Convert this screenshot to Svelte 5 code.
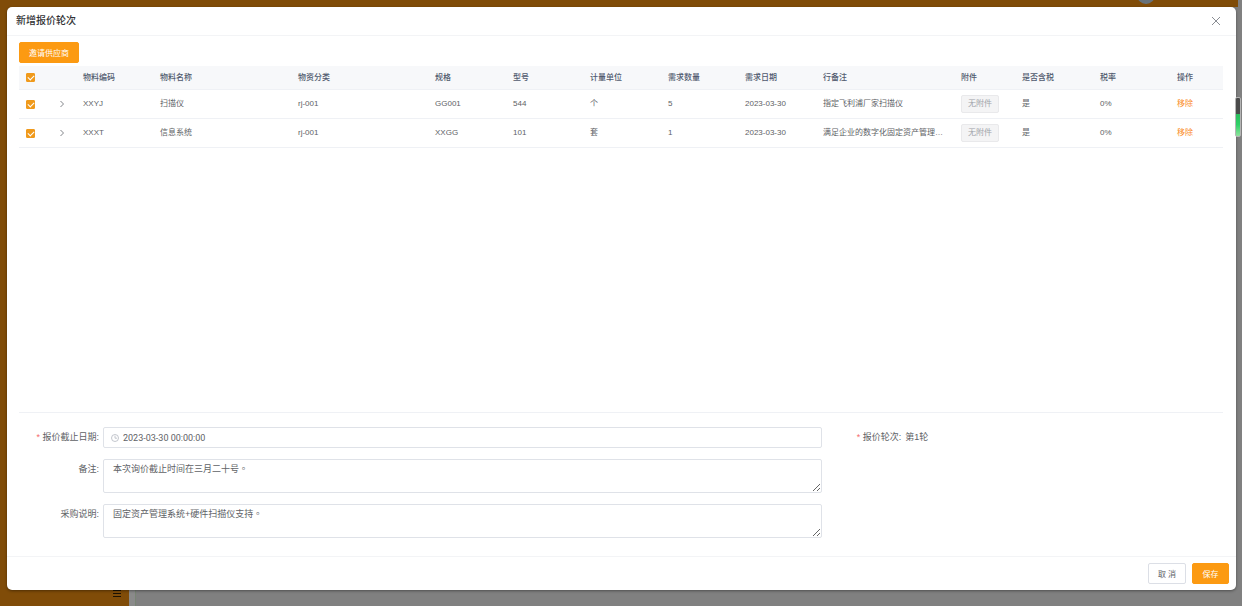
<script lang="ts">
type Row = {
	code: string;
	name: string;
	category: string;
	spec: string;
	model: string;
	unit: string;
	qty: number;
	date: string;
	remark: string;
	taxed: string;
	rate: string;
	checked: boolean;
};

const columns = [
	{ label: '物料编码', width: 77 },
	{ label: '物料名称', width: 138 },
	{ label: '物资分类', width: 137 },
	{ label: '规格', width: 78 },
	{ label: '型号', width: 77 },
	{ label: '计量单位', width: 78 },
	{ label: '需求数量', width: 77 },
	{ label: '需求日期', width: 78 },
	{ label: '行备注', width: 138 },
	{ label: '附件', width: 61 },
	{ label: '是否含税', width: 78 },
	{ label: '税率', width: 77 },
	{ label: '操作', width: 53 },
];

let rows: Row[] = $state([
	{
		code: 'XXYJ',
		name: '扫描仪',
		category: 'rj-001',
		spec: 'GG001',
		model: '544',
		unit: '个',
		qty: 5,
		date: '2023-03-30',
		remark: '指定飞利浦厂家扫描仪',
		taxed: '是',
		rate: '0%',
		checked: true,
	},
	{
		code: 'XXXT',
		name: '信息系统',
		category: 'rj-001',
		spec: 'XXGG',
		model: '101',
		unit: '套',
		qty: 1,
		date: '2023-03-30',
		remark: '满足企业的数字化固定资产管理系统',
		taxed: '是',
		rate: '0%',
		checked: true,
	},
]);

let deadline = $state('2023-03-30 00:00:00');
let remark = $state('本次询价截止时间在三月二十号。');
let description = $state('固定资产管理系统+硬件扫描仪支持。');

const allChecked = $derived(rows.length > 0 && rows.every((r) => r.checked));

function toggleAll() {
	const next = !allChecked;
	rows.forEach((r) => (r.checked = next));
}

function remove(row: Row) {
	rows = rows.filter((r) => r !== row);
}
</script>

<div class="page">
	<div class="backdrop">
		<div class="topbar"><span class="avatar"></span></div>
		<div class="sidebar">
			<svg width="8" height="8" viewBox="0 0 8 8">
				<path d="M0 1.5h8M0 4.5h8M0 7.5h8" stroke="#1c1204" stroke-width="1.2" />
			</svg>
		</div>
		<div class="gutter"></div>
	</div>

	<div class="dialog" role="dialog" aria-labelledby="dialog-title">
		<header>
			<h1 id="dialog-title">新增报价轮次</h1>
			<button class="close" aria-label="关闭">
				<svg width="10" height="10" viewBox="0 0 10 10">
					<path d="M1 1l8 8M9 1l-8 8" stroke="#8a8d93" fill="none" />
				</svg>
			</button>
		</header>

		<main>
			<button class="btn primary invite">邀请供应商</button>

			<div class="table-wrap">
				<table>
					<colgroup>
						<col style:width="28px" />
						<col style:width="29px" />
						{#each columns as col}
							<col style:width="{col.width}px" />
						{/each}
					</colgroup>
					<thead>
						<tr>
							<th><input type="checkbox" aria-label="全选" checked={allChecked} onchange={toggleAll} /></th>
							<th></th>
							{#each columns as col}
								<th>{col.label}</th>
							{/each}
						</tr>
					</thead>
					<tbody>
						{#each rows as row (row.code)}
							<tr>
								<td><input type="checkbox" aria-label={row.code} bind:checked={row.checked} /></td>
								<td class="expand">
									<button aria-label="展开">
										<svg width="6" height="8" viewBox="0 0 6 8">
											<path d="M1.5 1l3 3-3 3" stroke="#73767c" stroke-width="0.9" fill="none" />
										</svg>
									</button>
								</td>
								<td>{row.code}</td>
								<td>{row.name}</td>
								<td>{row.category}</td>
								<td>{row.spec}</td>
								<td>{row.model}</td>
								<td>{row.unit}</td>
								<td>{row.qty}</td>
								<td>{row.date}</td>
								<td>{row.remark}</td>
								<td><button class="tag" disabled>无附件</button></td>
								<td>{row.taxed}</td>
								<td>{row.rate}</td>
								<td><button class="link" onclick={() => remove(row)}>移除</button></td>
							</tr>
						{/each}
					</tbody>
				</table>
			</div>

			<form>
				<div class="fields">
					<label for="deadline"><i>*</i> 报价截止日期:</label>
					<div class="date">
						<svg width="8" height="8" viewBox="0 0 8 8" fill="none" stroke="#b4b8c0" stroke-width="0.8">
							<circle cx="4" cy="4" r="3.5" />
							<path d="M4 1.8v2.4h2" />
						</svg>
						<input id="deadline" type="text" bind:value={deadline} />
					</div>
					<label for="remark">备注:</label>
					<textarea id="remark" bind:value={remark}></textarea>
					<label for="description">采购说明:</label>
					<textarea id="description" bind:value={description}></textarea>
				</div>
				<div class="round">
					<span class="label"><i>*</i> 报价轮次:</span>
					<span>第1轮</span>
				</div>
			</form>
		</main>

		<footer>
			<button class="btn">取 消</button>
			<button class="btn primary save">保存</button>
		</footer>
	</div>

	<div class="meter"></div>
</div>

<style>
	:global(body) {
		margin: 0;
		background: #808080;
	}
	.page {
		position: relative;
		box-sizing: border-box;
		display: flex;
		min-height: 100vh;
		padding: 7px 6px 16px 7px;
		font-family: 'Liberation Sans', 'Noto Sans CJK SC', sans-serif;
		font-size: 8px;
		color: #606266;
	}
	button,
	input,
	textarea {
		box-sizing: border-box;
		margin: 0;
		font: inherit;
		color: inherit;
	}
	button {
		padding: 0;
		border: 0;
		background: none;
		cursor: pointer;
	}
	svg {
		display: block;
	}

	.backdrop {
		position: absolute;
		inset: 0;
		display: grid;
		grid-template-columns: 129px 7px 1fr;
		grid-template-rows: 7px 1fr;
	}
	.topbar {
		grid-column: 1 / -1;
		display: flex;
		justify-content: flex-end;
		align-items: flex-end;
		margin-right: 4px;
		padding-right: 83px;
		background: #804c08;
		overflow: hidden;
	}
	.avatar {
		width: 18px;
		height: 18px;
		margin-bottom: 3px;
		border-radius: 50%;
		background: #66717a;
	}
	.sidebar {
		display: flex;
		justify-content: flex-end;
		align-items: flex-end;
		padding: 0 8px 9px 0;
		background: #804c08;
	}
	.gutter {
		box-sizing: border-box;
		background: #8a8a8a;
		border-right: 1px solid #788474;
	}
	.meter {
		position: absolute;
		top: 97px;
		right: 1px;
		box-sizing: border-box;
		width: 6px;
		height: 40px;
		border: 1px solid #b5b5b5;
		border-radius: 2px;
		background: linear-gradient(#4a4a4a 42%, #2bbd5d 43%, #2fd067 70%, #8ee29c);
	}

	.dialog {
		position: relative;
		flex: 1;
		min-width: 0;
		display: flex;
		flex-direction: column;
		border-radius: 5px;
		background: #fff;
		box-shadow: 0 1px 3px rgba(0, 0, 0, 0.4);
	}
	header {
		display: flex;
		align-items: center;
		justify-content: space-between;
		box-sizing: border-box;
		height: 29px;
		padding: 0 15px 0 9px;
		border-bottom: 1px solid #f3f4f6;
	}
	h1 {
		margin: 0;
		font-size: 10px;
		line-height: 16px;
		font-weight: 500;
		color: #303133;
	}

	main {
		flex: 1;
		display: flex;
		flex-direction: column;
		padding: 6px 13px 18px 12px;
	}
	.btn {
		height: 21px;
		border: 1px solid #dcdfe6;
		border-radius: 2px;
		background: #fff;
		white-space: nowrap;
	}
	.btn.primary {
		border-color: #fc9a12;
		background: #fc9a12;
		color: #fff;
	}
	.invite {
		align-self: flex-start;
		width: 60px;
		margin-bottom: 3px;
	}

	.table-wrap {
		flex: 1;
		border-bottom: 1px solid #eff1f5;
	}
	table {
		width: 100%;
		table-layout: fixed;
		border-collapse: separate;
		border-spacing: 0;
	}
	th,
	td {
		box-sizing: border-box;
		padding: 0 7px;
		border-bottom: 1px solid #eff1f5;
		text-align: left;
		white-space: nowrap;
		overflow: hidden;
		text-overflow: ellipsis;
		line-height: 12px;
	}
	th {
		height: 24px;
		background: #f7f8fa;
		font-weight: 500;
		color: #515a6e;
	}
	td {
		height: 29px;
	}
	input[type='checkbox'] {
		appearance: none;
		display: block;
		width: 9px;
		height: 9px;
		border: 1px solid #dcdfe6;
		border-radius: 1px;
		background: #fff;
	}
	input[type='checkbox']:checked {
		border-color: #f09a1c;
		background: #f09a1c;
	}
	input[type='checkbox']:checked::after {
		content: '';
		display: block;
		box-sizing: border-box;
		width: 4px;
		height: 6px;
		margin: 0 auto;
		border: solid #fff;
		border-width: 0 1px 1px 0;
		transform: rotate(45deg);
	}
	.expand button {
		display: block;
		margin-left: 5px;
	}
	.tag {
		display: block;
		width: 38px;
		height: 18px;
		border: 1px solid #e9e9eb;
		border-radius: 2px;
		background: #f4f4f5;
		color: #a0a3a9;
	}
	.link {
		color: #fa8c28;
	}

	form {
		display: grid;
		grid-template-columns: 2fr 1fr;
		padding-top: 14px;
		font-size: 9px;
		line-height: 12px;
	}
	.fields {
		display: grid;
		grid-template-columns: 84px 1fr;
		row-gap: 11px;
	}
	.fields label {
		padding: 4px 4px 0 0;
		text-align: right;
	}
	i {
		font-style: normal;
		color: #f56c6c;
	}
	.date {
		display: flex;
		align-items: center;
		gap: 4px;
		box-sizing: border-box;
		height: 21px;
		padding: 0 7px;
		border: 1px solid #dfe2e8;
		border-radius: 2px;
	}
	.date input {
		flex: 1;
		height: 17px;
		padding: 0;
		border: 0;
		outline: 0;
		background: none;
		font-family: Roboto, 'Noto Sans CJK SC', sans-serif;
	}
	textarea {
		display: block;
		width: 100%;
		height: 34px;
		padding: 3px 9px;
		border: 1px solid #dfe2e8;
		border-radius: 2px;
		background: #fff;
		font-family: 'Liberation Sans', 'Noto Sans CJK TC', sans-serif;
		resize: vertical;
	}
	.round {
		display: flex;
		gap: 4px;
		padding: 4px 0 0 35px;
	}

	footer {
		display: flex;
		justify-content: flex-end;
		gap: 6px;
		padding: 6px 7px;
		border-top: 1px solid #f3f4f6;
	}
	footer .btn {
		width: 38px;
	}
	footer .save {
		width: 37px;
	}
</style>
